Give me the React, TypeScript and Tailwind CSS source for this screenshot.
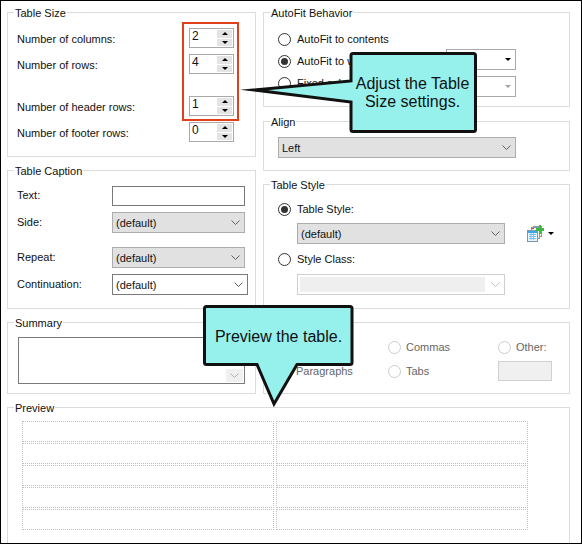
import type { ReactNode } from 'react';

const Group = ({ title, className, children }: { title?: string; className: string; children: ReactNode }) => (
  <div className={`relative border border-[#dcdcdc] ${className}`}>
    {title && <span className="absolute left-[6px] top-[-8px] bg-white px-[1px] leading-[16px]">{title}</span>}
    {children}
  </div>
);

const Chevron = ({ color = '#606060' }: { color?: string }) => (
  <svg width="9" height="5" viewBox="0 0 9 5" fill="none" stroke={color}>
    <path d="M0.5 0.5 L4.5 4.5 L8.5 0.5" />
  </svg>
);

const Caret = ({ color = '#000', up = false }: { color?: string; up?: boolean }) => (
  <svg width="6" height="3" viewBox="0 0 6 3" fill={color} className={up ? 'rotate-180' : ''}>
    <path d="M0 0 H6 L3 3 Z" />
  </svg>
);

const Select = ({ value, className }: { value: string; className: string }) => (
  <div className={`flex h-[21px] items-center justify-between border border-[#adadad] bg-[#e1e1e1] pl-[3px] pr-[4px] ${className}`}>
    <span>{value}</span>
    <Chevron />
  </div>
);

const Radio = ({ checked, disabled, className = '' }: { checked?: boolean; disabled?: boolean; className?: string }) => (
  <span className={`flex size-[13px] shrink-0 items-center justify-center rounded-full border bg-white ${disabled ? 'border-[#cccccc]' : 'border-[#333333]'} ${className}`}>
    {checked && <span className="size-[7px] rounded-full bg-[#333333]" />}
  </span>
);

const Spin = ({ value }: { value: number }) => (
  <div className="flex h-[20px] w-[45px] items-stretch justify-between border border-[#a9a9a9] bg-white pl-[2px]">
    <span className="text-[12px] leading-[14px]">{value}</span>
    <div className="m-[1px] flex w-[15px] flex-col gap-[1px]">
      <span className="flex flex-1 items-center justify-center bg-[#e4e4e4]">
        <Caret up />
      </span>
      <span className="flex flex-1 items-center justify-center bg-[#e4e4e4]">
        <Caret />
      </span>
    </div>
  </div>
);

const SizeRow = ({ label, value, className = '' }: { label: string; value: number; className?: string }) => (
  <div className={`flex h-[20px] items-center justify-between ${className}`}>
    <span className="pt-[2px]">{label}</span>
    <Spin value={value} />
  </div>
);

const CaptionRow = ({ label, className = '', children }: { label: string; className?: string; children: ReactNode }) => (
  <div className={`flex items-center ${className}`}>
    <span className="w-[95px] shrink-0 pb-[2px]">{label}</span>
    {children}
  </div>
);

const TableIcon = () => (
  <svg width="17" height="17" viewBox="0 0 17 17" className="block">
    <rect x="6.5" y="1.5" width="8" height="10" fill="#f4f4f4" stroke="#8a9aa6" />
    <rect x="4.5" y="2.5" width="8" height="11" fill="#f4f4f4" stroke="#8a9aa6" />
    <rect x="0.5" y="5.5" width="10" height="11" fill="#e8f4fb" stroke="#7a98aa" />
    <rect x="1" y="6" width="9" height="2" fill="#3fa9e8" />
    <path d="M2 9.5H9M2 11.5H9M2 13.5H9M4 8V15M6.5 8V15" stroke="#7fc4ee" strokeWidth="1" />
    <rect x="4" y="3" width="3" height="1" fill="#d9403a" />
    <path d="M12 0V3H9V6H12V9H14V6H17V3H14V0Z" fill="#3cb83c" />
  </svg>
);

export default function App() {
  return (
    <div className="relative h-[544px] w-[582px] overflow-hidden border border-black bg-white pl-[6px] pt-[11px] text-[11px] leading-[16px] text-[#111111] [font-family:'Liberation_Sans',sans-serif]">
      <div className="flex gap-[7px]">
        <div className="flex w-[249px] flex-col gap-[13px]">
          <Group title="Table Size" className="h-[145px] pl-[9px] pr-[21px] pt-[15px]">
            <SizeRow label="Number of columns:" value={2} />
            <SizeRow label="Number of rows:" value={4} className="mt-[6px]" />
            <SizeRow label="Number of header rows:" value={1} className="mt-[22px]" />
            <SizeRow label="Number of footer rows:" value={0} className="mt-[6px]" />
          </Group>
          <Group title="Table Caption" className="h-[139px] pl-[9px] pt-[15px]">
            <CaptionRow label="Text:">
              <div className="h-[20px] w-[133px] border border-[#7a7a7a]" />
            </CaptionRow>
            <CaptionRow label="Side:" className="mt-[6px]">
              <Select value="(default)" className="w-[133px]" />
            </CaptionRow>
            <CaptionRow label="Repeat:" className="mt-[14px]">
              <Select value="(default)" className="w-[133px]" />
            </CaptionRow>
            <CaptionRow label="Continuation:" className="mt-[6px]">
              <Select value="(default)" className="w-[136px] !border-[#7a7a7a] !bg-white" />
            </CaptionRow>
          </Group>
          <Group title="Summary" className="h-[72px] pl-[10px] pt-[14px]">
            <div className="flex h-[47px] w-[227px] items-end justify-end border border-[#7a7a7a] p-[1px]">
              <span className="flex h-[13px] w-[17px] items-center justify-center bg-[#f0f0f0]">
                <Chevron color="#b0b0b0" />
              </span>
            </div>
          </Group>
        </div>

        <div className="flex w-[307px] flex-col">
          <Group title="AutoFit Behavior" className="h-[95px] pl-[14px] pt-[18px]">
            <div className="flex items-center gap-[6px]">
              <Radio />
              <span>AutoFit to contents</span>
            </div>
            <div className="mt-[6px] flex items-center gap-[6px]">
              <Radio checked />
              <span>AutoFit to window</span>
            </div>
            <div className="mt-[6px] flex items-center gap-[6px]">
              <Radio />
              <span>Fixed column width</span>
            </div>
            <div className="absolute left-[182px] top-[36px] flex h-[21px] w-[70px] items-center justify-end border border-[#a9a9a9] pr-[4px]">
              <Caret />
            </div>
            <div className="absolute left-[182px] top-[63px] flex h-[21px] w-[70px] items-center justify-end border border-[#a9a9a9] pr-[4px]">
              <Caret color="#a0a0a0" />
            </div>
          </Group>
          <Group title="Align" className="mt-[14px] h-[50px] pl-[14px] pt-[15px]">
            <Select value="Left" className="w-[238px]" />
          </Group>
          <Group title="Table Style" className="mt-[13px] h-[125px] pl-[14px] pt-[16px]">
            <div className="flex items-center gap-[6px]">
              <Radio checked />
              <span>Table Style:</span>
            </div>
            <div className="ml-[19px] mt-[6px] flex items-center">
              <Select value="(default)" className="w-[208px]" />
              <span className="ml-[22px]"><TableIcon /></span>
              <span className="ml-[4px]"><Caret /></span>
            </div>
            <div className="mt-[7px] flex items-center gap-[6px]">
              <Radio />
              <span>Style Class:</span>
            </div>
            <div className="ml-[19px] mt-[7px] flex h-[21px] w-[208px] items-center justify-between border border-[#cfcfcf] pl-[2px] pr-[4px]">
              <span className="h-[15px] w-[185px] bg-[#efefef]" />
              <Chevron color="#c0c0c0" />
            </div>
          </Group>
          <Group className="mt-[13px] h-[72px] pl-[14px] pt-[16px] text-[#666666]">
            <div className="grid grid-cols-[110px_110px_auto] gap-y-[6px]">
              <div className="flex items-center gap-[6px]">
                <Radio disabled />
              </div>
              <div className="flex items-center gap-[5px]">
                <Radio disabled />
                <span>Commas</span>
              </div>
              <div className="flex items-center gap-[5px]">
                <Radio disabled />
                <span>Other:</span>
              </div>
              <div className="flex items-center gap-[5px]">
                <Radio disabled />
                <span>Paragraphs</span>
              </div>
              <div className="flex items-center gap-[5px]">
                <Radio disabled />
                <span>Tabs</span>
              </div>
              <div className="h-[20px] w-[54px] border border-[#d0d0d0] bg-[#f0f0f0]" />
            </div>
          </Group>
        </div>
      </div>

      <Group title="Preview" className="mt-[13px] h-[200px] w-[563px] pl-[14px] pt-[13px]">
        <div className="grid w-[506px] grid-cols-2 gap-x-[2px] gap-y-[1px]">
          {Array.from({ length: 10 }).map((_, i) => (
            <div key={i} className="h-[21px] border border-dotted border-[#c0c0c0]" />
          ))}
        </div>
      </Group>

      {/* red highlight */}
      <div className="absolute left-[181px] top-[21px] h-[99px] w-[57px] border-2 border-[#e2401c]" />

      {/* callout: table size */}
      <div className="absolute left-[237px] top-[51px] flex h-[83px] w-[241px] text-[16px] leading-[18px]">
        <svg width="241" height="83" viewBox="238 52 241 83" className="absolute inset-0">
          <path
            d="M351 55.5Q351 53.5 353 53.5H473.5Q475.5 53.5 475.5 55.5V129.5Q475.5 131.5 473.5 131.5H353Q351 131.5 351 129.5V102L254 90L351 81Z"
            fill="#96f0ec"
            stroke="#111"
            strokeWidth="3"
            strokeMiterlimit="14"
          />
        </svg>
        <span className="relative ml-[112px] flex w-[125px] items-center justify-center pb-[2px] text-center">
          Adjust the Table
          <br />
          Size settings.
        </span>
      </div>

      {/* callout: preview */}
      <div className="absolute left-[202px] top-[304px] h-[106px] w-[153px] text-[16px] leading-[18px]">
        <svg width="153" height="106" viewBox="203 305 153 106" className="absolute inset-0">
          <path
            d="M206.5 306.5H350Q352 306.5 352 308.5V362.5Q352 364.5 350 364.5H297L274 404L257 364.5H206.5Q204.5 364.5 204.5 362.5V308.5Q204.5 306.5 206.5 306.5Z"
            fill="#96f0ec"
            stroke="#111"
            strokeWidth="3"
            strokeMiterlimit="14"
          />
        </svg>
        <span className="absolute left-0 top-[23px] w-[151px] text-center">Preview the table.</span>
      </div>
    </div>
  );
}
